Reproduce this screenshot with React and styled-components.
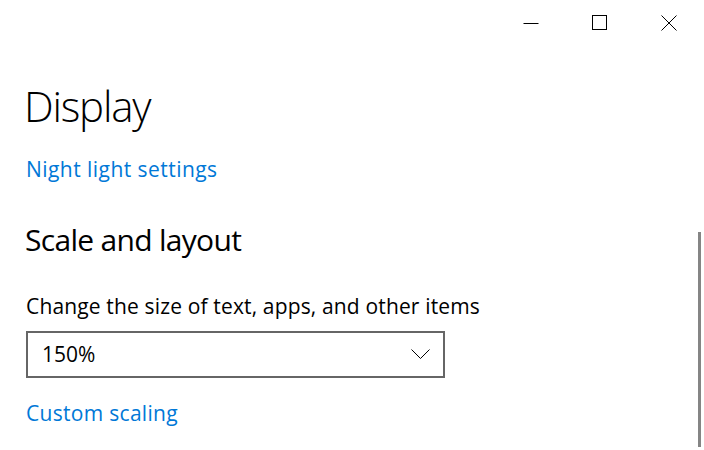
import React from "react";
import styled, { createGlobalStyle } from "styled-components";

const Global = createGlobalStyle`
  html, body { margin: 0; padding: 0; background: #fff; }
  body { font-family: "Open Sans", "Noto Sans", sans-serif; color: #000; overflow: hidden; }
`;

const Window = styled.div`
  position: relative;
  width: 704px;
  height: 450px;
  background: #fff;
  overflow: hidden;
`;

const TitleBar = styled.div`
  display: flex;
  justify-content: flex-end;
  height: 46px;
  padding-right: 1px;
`;

const CaptionButton = styled.div`
  width: 69px;
  height: 46px;
  display: flex;
  align-items: center;
  justify-content: center;
  svg { display: block; }
`;

const Content = styled.main`
  display: flex;
  flex-direction: column;
  align-items: flex-start;
  padding-left: 24px;
`;

const PageTitle = styled.h1`
  margin: 32px 0 0 0;
  font-size: 42px;
  line-height: 56px;
  font-weight: 300;
  letter-spacing: -1.2px;
`;

const Link = styled.a`
  margin: ${(p) => p.$mt}px 0 0 2px;
  font-size: 21px;
  line-height: 30px;
  color: #0078d7;
  text-decoration: none;
  letter-spacing: ${(p) => p.$ls}px;
`;

const SectionTitle = styled.h2`
  margin: 36px 0 0 1px;
  font-size: 30px;
  line-height: 40px;
  font-weight: 400;
  letter-spacing: -0.7px;
`;

const Label = styled.div`
  margin: 31px 0 0 2px;
  font-size: 21px;
  line-height: 30px;
  letter-spacing: 0.15px;
`;

const Select = styled.div`
  margin: 10px 0 0 2px;
  box-sizing: border-box;
  width: 419px;
  height: 47px;
  border: 2px solid #666;
  display: flex;
  align-items: center;
  justify-content: space-between;
  padding: 0 13px 0 14px;
  font-size: 21px;
  line-height: 43px;
`;

const ScrollThumb = styled.div`
  position: absolute;
  left: 698px;
  top: 232px;
  width: 3px;
  height: 215px;
  background: #858585;
`;

export default function App() {
  return (
    <Window>
      <Global />
      <TitleBar>
        <CaptionButton>
          <svg width="16" height="16" viewBox="0 0 16 16">
            <line x1="0.5" y1="8.5" x2="15.5" y2="8.5" stroke="#000" strokeWidth="1" />
          </svg>
        </CaptionButton>
        <CaptionButton>
          <svg width="16" height="16" viewBox="0 0 16 16">
            <rect x="0.5" y="0.5" width="14" height="14" fill="none" stroke="#000" strokeWidth="1" />
          </svg>
        </CaptionButton>
        <CaptionButton>
          <svg width="16" height="16" viewBox="0 0 16 16">
            <path d="M0.5 0.5 L15.5 15.5 M15.5 0.5 L0.5 15.5" stroke="#000" strokeWidth="1" fill="none" />
          </svg>
        </CaptionButton>
      </TitleBar>
      <Content>
        <PageTitle>Display</PageTitle>
        <Link $mt={20} $ls={0.45}>Night light settings</Link>
        <SectionTitle>Scale and layout</SectionTitle>
        <Label>Change the size of text, apps, and other items</Label>
        <Select>
          <span>150%</span>
          <svg width="19" height="11" viewBox="0 0 19 11">
            <path d="M0.5 0.5 L9.5 9.5 L18.5 0.5" stroke="#000" strokeWidth="1" fill="none" />
          </svg>
        </Select>
        <Link $mt={20} $ls={0.3}>Custom scaling</Link>
      </Content>
      <ScrollThumb />
    </Window>
  );
}
